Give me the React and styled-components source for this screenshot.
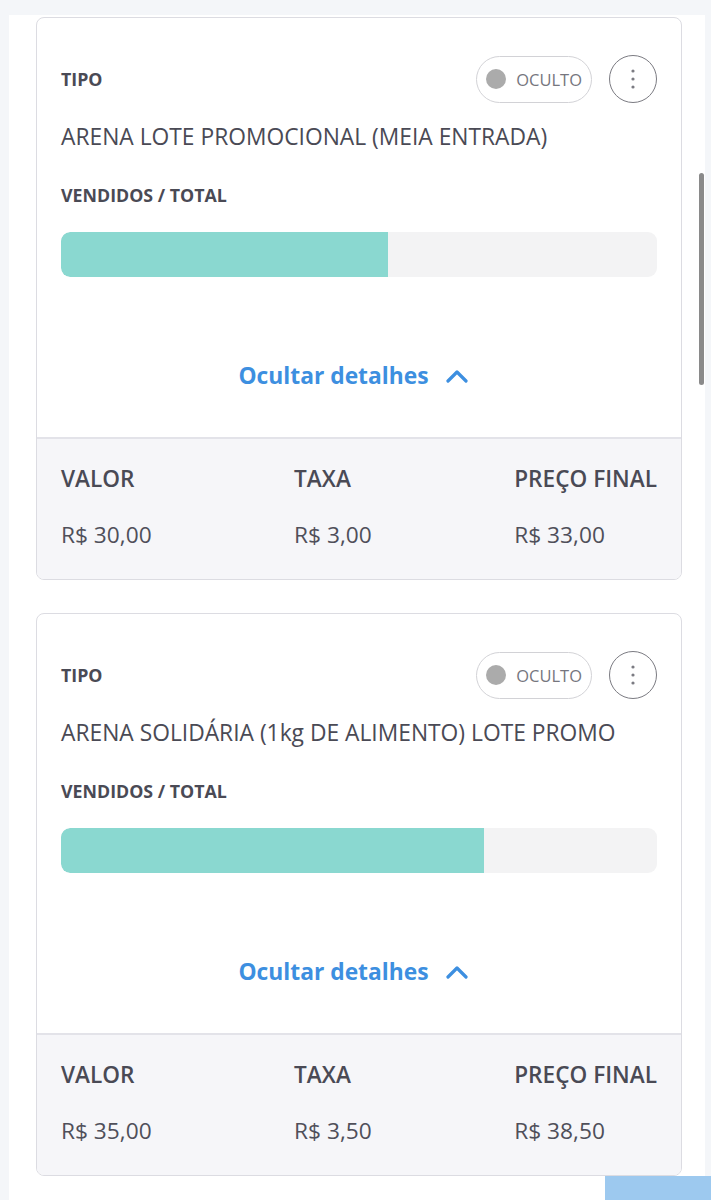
import React from 'react'
import styled, { createGlobalStyle } from 'styled-components'

const GlobalStyle = createGlobalStyle`
  html, body {
    margin: 0;
    padding: 0;
    background: #f4f6f9;
    font-family: "Open Sans", "Liberation Sans", sans-serif;
    color: #4a4a55;
  }
`

const Page = styled.div`
  position: relative;
  height: 1200px;
  overflow: hidden;
  padding-top: 15px;
  box-sizing: border-box;
`

const Panel = styled.div`
  margin-left: 9px;
  width: 696px;
  min-height: 1185px;
  background: #fff;
  box-sizing: border-box;
  padding: 2px 0 0 27px;
  display: flex;
  flex-direction: column;
  gap: 33px;
`

const ScrollThumb = styled.div`
  position: absolute;
  left: 699px;
  top: 173px;
  width: 5px;
  height: 212px;
  border-radius: 3px;
  background: #8a8a8a;
`

const FloatingButton = styled.div`
  position: absolute;
  left: 605px;
  top: 1176px;
  width: 106px;
  height: 40px;
  background: #9dc9ef;
`

const Card = styled.div`
  width: 646px;
  box-sizing: border-box;
  border: 1.5px solid #dcdce2;
  border-radius: 8px;
  overflow: hidden;
  background: #fff;
`

const Body = styled.div`
  padding: 37px 24px 46px 24px;
  display: flex;
  flex-direction: column;
`

const HeaderRow = styled.div`
  display: flex;
  align-items: center;
  justify-content: space-between;
  height: 48px;
`

const Label = styled.div`
  font-size: 17.8px;
  font-weight: 700;
  line-height: 24px;
  color: #4a4a55;
`

const Actions = styled.div`
  display: flex;
  align-items: center;
  gap: 17px;
`

const Toggle = styled.div`
  display: flex;
  align-items: center;
  gap: 10px;
  height: 47px;
  box-sizing: border-box;
  padding: 0 9px 0 9px;
  border: 1.5px solid #d2d2d6;
  border-radius: 24px;
  font-size: 16.5px;
  color: #76767e;
`

const Dot = styled.span`
  width: 20px;
  height: 20px;
  border-radius: 50%;
  background: #ababab;
`

const MenuButton = styled.div`
  width: 48px;
  height: 48px;
  box-sizing: border-box;
  border: 1.5px solid #7b7b82;
  border-radius: 50%;
  display: flex;
  align-items: center;
  justify-content: center;
`

const Title = styled.div`
  margin-top: 20px;
  font-size: 22.8px;
  line-height: 28px;
  color: #4a4a55;
`

const SubLabel = styled(Label)`
  margin-top: 32px;
`

const Bar = styled.div`
  margin-top: 25px;
  height: 45px;
  border-radius: 9px;
  background: #f3f3f4;
  overflow: hidden;
`

const Fill = styled.div`
  height: 100%;
  background: #8ad8d0;
  border-radius: 9px 0 0 9px;
`

const Toggler = styled.div`
  margin-top: 84px;
  padding-right: 12px;
  display: flex;
  align-items: center;
  justify-content: center;
  gap: 17px;
  font-size: 22.8px;
  font-weight: 700;
  line-height: 30px;
  color: #3d8fe0;
`

const Footer = styled.div`
  background: #f6f6f9;
  border-top: 2px solid #e3e3e9;
  padding: 25px 24px 29px 24px;
  display: flex;
  justify-content: space-between;
`

const Col = styled.div`
  display: flex;
  flex-direction: column;
  gap: 26px;
`

const ColHead = styled.div`
  font-size: 22.6px;
  font-weight: 600;
  line-height: 30px;
  color: #4a4a55;
`

const ColValue = styled.div`
  font-size: 22.7px;
  line-height: 30px;
  color: #4f4f5a;
`

const Dots = () => (
  <svg width="6" height="22" viewBox="0 0 6 22">
    <circle cx="3" cy="3" r="1.6" fill="#7b7b82" />
    <circle cx="3" cy="11" r="1.6" fill="#7b7b82" />
    <circle cx="3" cy="19" r="1.6" fill="#7b7b82" />
  </svg>
)

const ChevronUp = () => (
  <svg width="22" height="14" viewBox="0 0 22 14">
    <polyline points="2,12 11,3 20,12" fill="none" stroke="#3d8fe0" strokeWidth="3.2" strokeLinecap="round" strokeLinejoin="round" />
  </svg>
)

const tickets = [
  { name: 'ARENA LOTE PROMOCIONAL (MEIA ENTRADA)', sold: 54.8, valor: 'R$ 30,00', taxa: 'R$ 3,00', final: 'R$ 33,00' },
  { name: 'ARENA SOLIDÁRIA (1kg DE ALIMENTO) LOTE PROMO', sold: 70.9, valor: 'R$ 35,00', taxa: 'R$ 3,50', final: 'R$ 38,50' },
]

const TicketCard = ({ ticket }) => (
  <Card>
    <Body>
      <HeaderRow>
        <Label>TIPO</Label>
        <Actions>
          <Toggle>
            <Dot />
            OCULTO
          </Toggle>
          <MenuButton>
            <Dots />
          </MenuButton>
        </Actions>
      </HeaderRow>
      <Title>{ticket.name}</Title>
      <SubLabel>VENDIDOS / TOTAL</SubLabel>
      <Bar>
        <Fill style={{ width: `${ticket.sold}%` }} />
      </Bar>
      <Toggler>
        Ocultar detalhes
        <ChevronUp />
      </Toggler>
    </Body>
    <Footer>
      <Col>
        <ColHead>VALOR</ColHead>
        <ColValue>{ticket.valor}</ColValue>
      </Col>
      <Col>
        <ColHead>TAXA</ColHead>
        <ColValue>{ticket.taxa}</ColValue>
      </Col>
      <Col>
        <ColHead>PREÇO FINAL</ColHead>
        <ColValue>{ticket.final}</ColValue>
      </Col>
    </Footer>
  </Card>
)

export default function App() {
  return (
    <Page>
      <GlobalStyle />
      <Panel>
        {tickets.map((t) => (
          <TicketCard key={t.name} ticket={t} />
        ))}
      </Panel>
      <ScrollThumb />
      <FloatingButton />
    </Page>
  )
}
